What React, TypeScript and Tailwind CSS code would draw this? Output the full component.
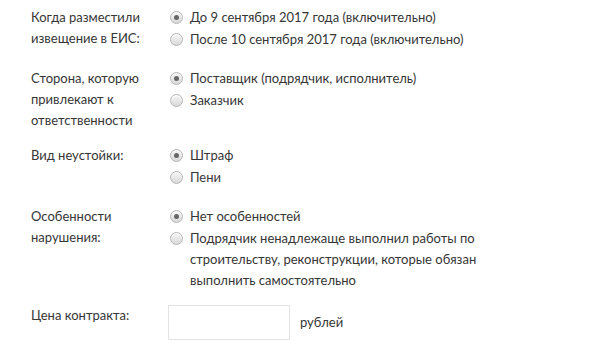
import { ReactNode } from 'react';

interface RadioOptionProps {
    checked?: boolean;
    children: ReactNode;
}

function RadioOption({ checked = false, children }: RadioOptionProps) {
    return (
        <div className="flex items-start gap-[7px]">
            <span className="mt-[4px] flex h-[13px] w-[13px] shrink-0 items-center justify-center rounded-full border border-[#b5b5b5] bg-gradient-to-b from-[#f7f7f7] to-[#d9d9d9] shadow-[inset_0_1px_0_#fff]">
                {checked && <span className="h-[5px] w-[5px] rounded-full bg-[#666]" />}
            </span>
            <span className="leading-[21px]">{children}</span>
        </div>
    );
}

interface FieldRowProps {
    label: ReactNode;
    className?: string;
    children: ReactNode;
}

function FieldRow({ label, className = '', children }: FieldRowProps) {
    return (
        <div className={`flex ${className}`}>
            <div className="w-[139px] shrink-0 leading-[21px]">{label}</div>
            <div className="flex flex-col gap-[1px]">{children}</div>
        </div>
    );
}

export default function App() {
    return (
        <div
            className="h-[354px] w-[595px] overflow-hidden bg-white pl-[31px] pt-[7px] text-[13px] text-[#363636]"
            style={{ fontFamily: 'Lato, "Noto Sans", sans-serif' }}
        >
            <FieldRow label={<>Когда разместили<br />извещение в ЕИС:</>}>
                <RadioOption checked>До 9 сентября 2017 года (включительно)</RadioOption>
                <RadioOption>После 10 сентября 2017 года (включительно)</RadioOption>
            </FieldRow>

            <FieldRow className="mt-[18px]" label={<>Сторона, которую<br />привлекают к<br />ответственности</>}>
                <RadioOption checked>Поставщик (подрядчик, исполнитель)</RadioOption>
                <RadioOption>Заказчик</RadioOption>
            </FieldRow>

            <FieldRow className="mt-[14px]" label="Вид неустойки:">
                <RadioOption checked>Штраф</RadioOption>
                <RadioOption>Пени</RadioOption>
            </FieldRow>

            <FieldRow className="mt-[18px]" label={<>Особенности<br />нарушения:</>}>
                <RadioOption checked>Нет особенностей</RadioOption>
                <RadioOption>
                    Подрядчик ненадлежаще выполнил работы по
                    <br />
                    строительству, реконструкции, которые обязан
                    <br />
                    выполнить самостоятельно
                </RadioOption>
            </FieldRow>

            {/* Contract price */}
            <div className="mt-[14px] flex items-start">
                <div className="w-[137px] shrink-0 leading-[21px]">Цена контракта:</div>
                <div className="flex items-center gap-[10px]">
                    <input
                        type="text"
                        className="h-[35px] w-[122px] border border-[#e3e3e3] bg-white outline-none"
                    />
                    <span>рублей</span>
                </div>
            </div>
        </div>
    );
}
